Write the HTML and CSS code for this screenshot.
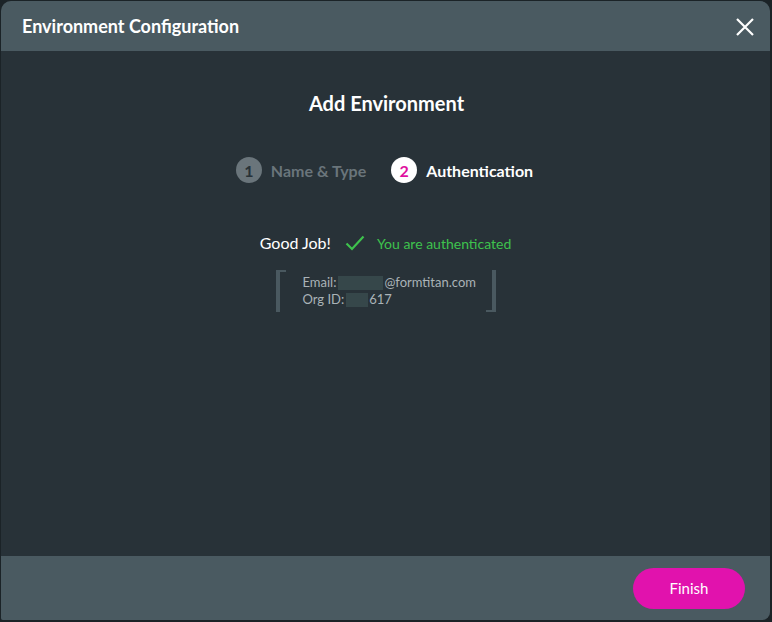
FILE: index.html
```html
<!DOCTYPE html>
<html lang="en">
<head>
  <meta charset="UTF-8">
  <title>Environment Configuration</title>
  <link rel="stylesheet" href="styles.css">
</head>
<body>

  <div class="dialog">
    <div class="dialog-header">
      <h2>Environment Configuration</h2>
      <button class="close-btn" aria-label="Close">
        <svg width="18" height="18" viewBox="0 0 18 18"><path d="M1 1L17 17M17 1L1 17" stroke="#fff" stroke-width="2.2" fill="none"/></svg>
      </button>
    </div>

    <div class="dialog-body">
      <h1>Add Environment</h1>

      <div class="steps">
        <div class="step done"><span class="step-num">1</span>Name &amp; Type</div>
        <div class="step active"><span class="step-num">2</span>Authentication</div>
      </div>

      <div class="auth-status">
        <span class="good-job">Good Job!</span>
        <svg class="check" width="20" height="16" viewBox="0 0 20 16"><path d="M1.5 8.5L7 14L18.5 1.5" stroke="#3ec24d" stroke-width="2.2" fill="none"/></svg>
        <span class="auth-msg">You are authenticated</span>
      </div>

      <div class="account-info">
        <div>Email:<span class="redacted email-mask"></span>@formtitan.com</div>
        <div>Org ID:<span class="redacted org-mask"></span>617</div>
      </div>
    </div>

    <div class="dialog-footer">
      <button class="finish-btn">Finish</button>
    </div>
  </div>

</body>
</html>
```

FILE: styles.css
```css
body {
  background: #1b2327;
  font-family: Lato, 'Noto Sans', sans-serif;
  margin: 0;
  padding: 0;
}

.dialog {
  margin: 1px;
  width: 769px;
  height: 619px;
  background: #283238;
  border-radius: 10px 10px 8px 2px;
  overflow: hidden;
  display: flex;
  flex-direction: column;
}

.dialog-header {
  background: #4a5a61;
  height: 50px;
  display: flex;
  align-items: center;
  justify-content: space-between;
  padding: 0 16px 0 21px;
}

.dialog-header h2 {
  color: #fff;
  font-size: 18px;
  font-weight: bold;
  margin: 0;
}

.close-btn {
  background: none;
  border: none;
  padding: 0;
  width: 18px;
  height: 18px;
  cursor: pointer;
  margin-top: 1px;
}

.dialog-body {
  flex: 1;
  display: flex;
  flex-direction: column;
  align-items: center;
  padding-top: 40px;
}

h1 {
  color: #fff;
  font-size: 20px;
  font-weight: bold;
  margin: 0 0 0 2px;
  line-height: 24px;
}

.steps {
  display: flex;
  gap: 25px;
  margin-top: 42px;
  margin-left: -2px;
}

.step {
  display: flex;
  align-items: center;
  gap: 9px;
  font-size: 16px;
  font-weight: bold;
}

.step-num {
  width: 26px;
  height: 26px;
  border-radius: 50%;
  display: flex;
  align-items: center;
  justify-content: center;
  font-size: 16px;
}

.step.done {
  color: #6a757b;
}

.step.done .step-num {
  background: #6a757b;
  color: #283238;
}

.step.active {
  color: #fff;
}

.step.active .step-num {
  background: #fff;
  color: #e0119f;
}

.auth-status {
  display: flex;
  align-items: center;
  margin-top: 50px;
}

.good-job {
  color: #fff;
  font-size: 16px;
}

.check {
  margin: 0 12px 0 14px;
}

.auth-msg {
  color: #3ec24d;
  font-size: 14px;
  margin-top: 1px;
}

.account-info {
  margin-top: 18px;
  width: 220px;
  box-sizing: border-box;
  padding: 4px 4px 4px 23px;
  border-left: 4px solid #4a5960;
  border-right: 4px solid #4a5960;
  color: #aab3b7;
  font-size: 13px;
  line-height: 17px;
  position: relative;
}

.account-info::before,
.account-info::after {
  content: "";
  position: absolute;
  top: 0;
  width: 6px;
  height: 2px;
  background: #4a5960;
}

.account-info::before {
  left: 0;
}

.account-info::after {
  right: 0;
  top: auto;
  bottom: 0;
}

.redacted {
  display: inline-block;
  height: 14px;
  margin: 0 1px 0 2px;
  background: #36474a;
  vertical-align: -3px;
}

.email-mask {
  width: 45px;
}

.org-mask {
  width: 22px;
}

.dialog-footer {
  background: #4a5a61;
  height: 64px;
  display: flex;
  align-items: center;
  justify-content: flex-end;
  padding-right: 25px;
}

.finish-btn {
  background: #e112ad;
  color: #fff;
  border: none;
  border-radius: 21px;
  width: 112px;
  height: 41px;
  font-family: Lato, 'Noto Sans', sans-serif;
  font-size: 15px;
  cursor: pointer;
}
```
